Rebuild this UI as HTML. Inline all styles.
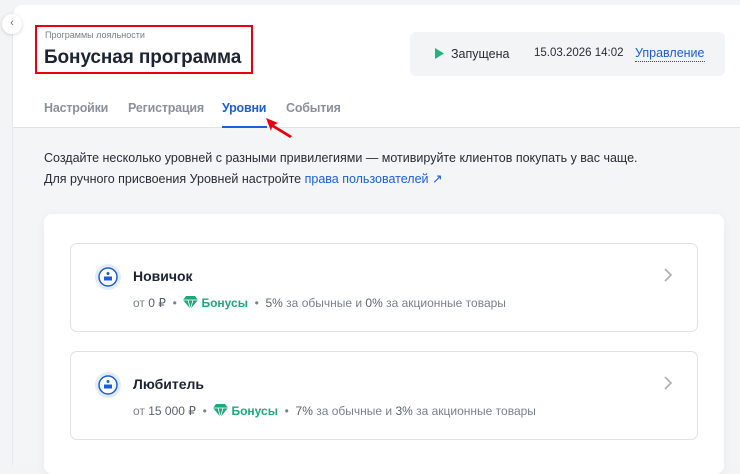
<!DOCTYPE html>
<html><head><meta charset="utf-8"><style>
*{box-sizing:border-box;margin:0;padding:0}
body{width:740px;height:450px;overflow:hidden;background:#f3f4f6;font-family:"Liberation Sans","DejaVu Sans",sans-serif;position:relative}
.panel{position:absolute;left:12px;top:5px;width:740px;height:460px;background:#f4f5f7;border-radius:10px 0 0 0;overflow:hidden;border-left:1px solid #e6e8eb}
.head{position:absolute;left:0;top:0;right:0;height:123px;background:#fff;border-bottom:1px solid #dfe2e6}
.back{position:absolute;left:2px;top:14px;width:20px;height:20px;border-radius:50%;background:#fff;box-shadow:0 1px 4px rgba(0,0,0,.15);font-size:11px;color:#666;text-align:center;line-height:19px;z-index:3}
.redbox{position:absolute;left:35px;top:25px;width:218px;height:49px;border:2px solid #e8000b}
.sub{position:absolute;left:45px;top:30px;font-size:9px;color:#7a7f87}
.title{position:absolute;left:44px;top:47px;font-size:19px;font-weight:bold;color:#1c2333;letter-spacing:-.1px}
.status{position:absolute;left:410px;top:32px;width:315px;height:44px;background:#f3f4f6;border-radius:6px}
.tabs{position:absolute;top:101px;font-size:12.5px;color:#8a919c;font-weight:bold;letter-spacing:-.2px}
.desc{position:absolute;left:44px;font-size:12.5px;color:#262c36}
.card{position:absolute;left:44px;top:214px;width:680px;height:260px;background:#fff;border-radius:8px;box-shadow:0 2px 10px rgba(0,0,0,.05)}
.item{position:absolute;left:70px;width:628px;height:89px;border:1px solid #dfe2e6;border-radius:7px;background:#fff}
.ic{position:absolute;left:24px;top:20px;width:26px;height:26px;border-radius:50%;background:#e3ecfb}
.name{position:absolute;left:62px;top:24px;font-size:14px;font-weight:bold;color:#1c2333}
.meta{position:absolute;left:62px;top:52px;font-size:12px;color:#7a808a;white-space:nowrap}
.meta b{color:#5a606a;font-weight:normal}
.g{color:#1fa67a;font-weight:bold}
.gem{display:inline-block;vertical-align:-2px;margin-right:3px}
.chev{position:absolute;right:24px;top:24px}
</style></head><body>
<div class="back">‹</div>
<div class="panel">
<div class="head"></div>
</div>
<div class="redbox"></div>
<div class="sub">Программы лояльности</div>
<div class="title">Бонусная программа</div>
<div class="status">
<svg style="position:absolute;left:25px;top:16px" width="9" height="11"><path d="M0 0L9 5.5L0 11Z" fill="#22b37f"/></svg>
<span style="position:absolute;left:41px;top:15px;font-size:12.5px;color:#262c36">Запущена</span>
<span style="position:absolute;left:124px;top:15px;font-size:11.5px;color:#262c36">15.03.2026 14:02</span>
<span style="position:absolute;left:225px;top:14px;font-size:12.5px;color:#1a5fd8;border-bottom:1px dotted #1a5fd8;line-height:15px">Управление</span>
</div>
<div class="tabs" style="left:44px">Настройки</div>
<div class="tabs" style="left:128px">Регистрация</div>
<div class="tabs" style="left:222px;color:#1a5fd8">Уровни</div>
<div style="position:absolute;left:222px;top:126px;width:45px;height:2px;background:#1a5fd8"></div>
<div class="tabs" style="left:286px">События</div>
<svg style="position:absolute;left:262px;top:114px" width="36" height="26"><path d="M4 4L16 9L12 11L30 22L28 24L10 13L9 17Z" fill="#e8000b"/></svg>
<div class="desc" style="top:151px">Создайте несколько уровней с разными привилегиями — мотивируйте клиентов покупать у вас чаще.</div>
<div class="desc" style="top:171px">Для ручного присвоения Уровней настройте <span style="color:#1a5fd8">права пользователей ↗</span></div>
<div class="card"></div>
<div class="item" style="top:243px">
<div class="ic"><svg width="26" height="26"><circle cx="13" cy="13" r="9" fill="#fff" stroke="#1a5fd8" stroke-width="1.5"/><circle cx="13" cy="9.5" r="1.5" fill="#1a5fd8"/><rect x="9" y="12.5" width="8" height="4" fill="#1a5fd8"/></svg></div>
<div class="name">Новичок</div>
<div class="meta">от <b>0 ₽</b> &nbsp;•&nbsp; <span class="g"><svg class="gem" width="15" height="13"><path d="M3 0H12L15 4L7.5 13L0 4Z" fill="#1fa67a"/><path d="M0 4H15M5 4L7.5 13L10 4" stroke="#fff" stroke-width=".8" fill="none"/></svg>Бонусы</span> &nbsp;•&nbsp; <b>5%</b> за обычные и <b>0%</b> за акционные товары</div>
<svg class="chev" width="10" height="14"><path d="M2 1L8 7L2 13" stroke="#a7adb6" stroke-width="1.6" fill="none"/></svg>
</div>
<div class="item" style="top:351px">
<div class="ic"><svg width="26" height="26"><circle cx="13" cy="13" r="9" fill="#fff" stroke="#1a5fd8" stroke-width="1.5"/><circle cx="13" cy="9.5" r="1.5" fill="#1a5fd8"/><rect x="9" y="12.5" width="8" height="4" fill="#1a5fd8"/></svg></div>
<div class="name">Любитель</div>
<div class="meta">от <b>15 000 ₽</b> &nbsp;•&nbsp; <span class="g"><svg class="gem" width="15" height="13"><path d="M3 0H12L15 4L7.5 13L0 4Z" fill="#1fa67a"/><path d="M0 4H15M5 4L7.5 13L10 4" stroke="#fff" stroke-width=".8" fill="none"/></svg>Бонусы</span> &nbsp;•&nbsp; <b>7%</b> за обычные и <b>3%</b> за акционные товары</div>
<svg class="chev" width="10" height="14"><path d="M2 1L8 7L2 13" stroke="#a7adb6" stroke-width="1.6" fill="none"/></svg>
</div>
</body></html>
